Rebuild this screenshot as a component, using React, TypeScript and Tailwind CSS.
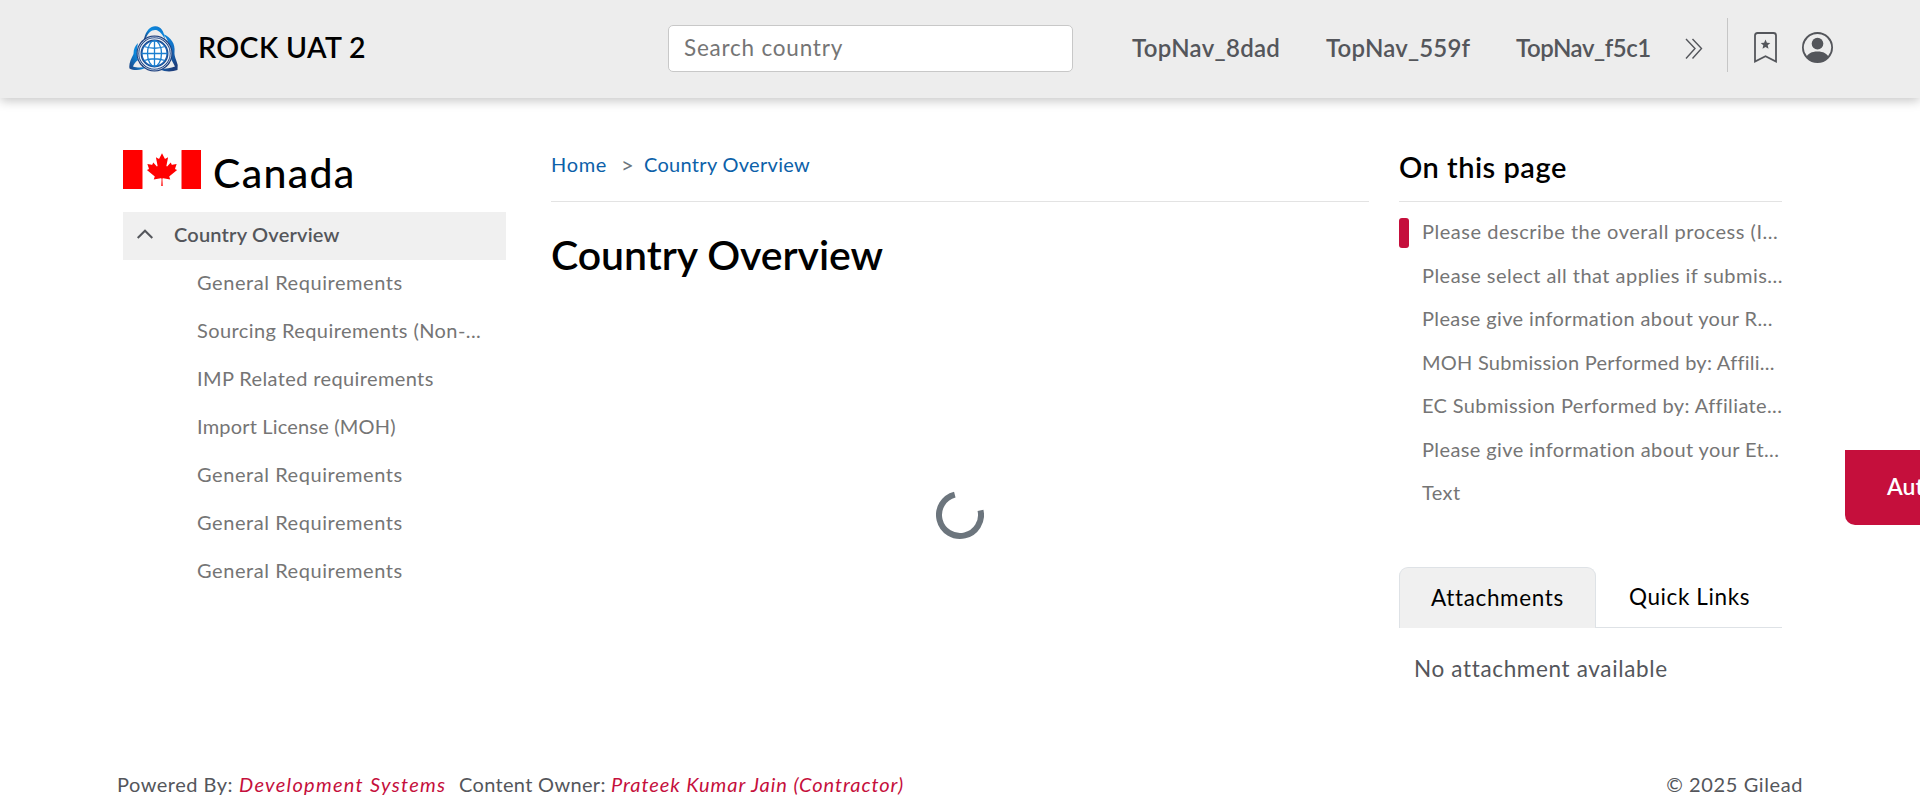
import { BsPersonCircle } from "react-icons/bs";

const topNav = [
  { label: "TopNav_8dad", cls: "w-[194px] tracking-[0.3px]" },
  { label: "TopNav_559f", cls: "w-[190px] tracking-[0.2px]" },
  { label: "TopNav_f5c1", cls: "w-[168px] tracking-[-0.45px]" },
];

const menu = [
  { label: "General Requirements", cls: "tracking-[0.56px]" },
  { label: "Sourcing Requirements (Non-...", cls: "tracking-[0.42px]" },
  { label: "IMP Related requirements", cls: "tracking-[0.38px]" },
  { label: "Import License (MOH)", cls: "tracking-[0.18px]" },
  { label: "General Requirements", cls: "tracking-[0.56px]" },
  { label: "General Requirements", cls: "tracking-[0.56px]" },
  { label: "General Requirements", cls: "tracking-[0.56px]" },
];

const sections = [
  { label: "Please describe the overall process (I...", cls: "tracking-[0.53px]" },
  { label: "Please select all that applies if submis...", cls: "tracking-[0.47px]" },
  { label: "Please give information about your R...", cls: "tracking-[0.38px]" },
  { label: "MOH Submission Performed by: Affili...", cls: "tracking-[0.25px]" },
  { label: "EC Submission Performed by: Affiliate...", cls: "tracking-[0.37px]" },
  { label: "Please give information about your Et...", cls: "tracking-[0.39px]" },
  { label: "Text", cls: "tracking-[0.4px]" },
];

function Logo() {
  return (
    <svg width="49" height="47" viewBox="0 0 49 47" fill="none">
      <defs>
        <linearGradient id="ribbonTop" x1="0" y1="1" x2="1" y2="0">
          <stop offset="0" stopColor="#1d3f7d" />
          <stop offset="0.5" stopColor="#0a8be0" />
          <stop offset="1" stopColor="#1470c4" />
        </linearGradient>
        <linearGradient id="ribbonRight" x1="0" y1="0" x2="0.6" y2="1">
          <stop offset="0" stopColor="#0a8be0" />
          <stop offset="0.6" stopColor="#1470c4" />
          <stop offset="1" stopColor="#1d3f7d" />
        </linearGradient>
      </defs>
      <path d="M15 13C17 4 22 0 26.5 0.3C32 0.6 35 5 36 13C32 6.500 29.500 4 26 4C22 4 19 7 16.500 13Z" fill="url(#ribbonTop)" />
      <path d="M34 8C42 11 46.500 18 45.500 26C45 30 47.500 34 48.700 39L48.500 44C43 46 36 46 31 43.500C37 42.500 42 42 46 40.500C44.500 37 41 33 41 28C41 19 39 13 34 8Z" fill="url(#ribbonRight)" />
      <path d="M9 17C7.500 23 7.500 30 9 34C6.500 36 4.500 38.500 4 40.500C8 42 13 41.500 18 41C13 44.500 5 45 0.500 42.500C-0.500 38 2 33 4.500 28C4.500 23 6 20 9 17Z" fill="url(#ribbonTop)" />
      <circle cx="25.500" cy="27.500" r="18" fill="#1d3f7d" />
      <circle cx="25.500" cy="27.500" r="16.500" stroke="#d6e2f0" strokeWidth="0.8" />
      <circle cx="25.500" cy="27.500" r="14.600" stroke="#e8f1fa" strokeWidth="1.3" />
      <circle cx="25.500" cy="27.500" r="12.600" fill="#fff" stroke="#1a5fae" strokeWidth="1.4" />
      <g stroke="#1b7fd0" strokeWidth="1.3">
        <path d="M25.500 14.500V40.500M12.500 27.500H38.500M15 20.500Q25.500 24 36 20.500M15 34.500Q25.500 31 36 34.500" />
        <ellipse cx="25.500" cy="27.500" rx="7" ry="12.800" />
      </g>
    </svg>
  );
}

function CanadaFlag() {
  return (
    <svg width="78" height="39" viewBox="0 0 9600 4800">
      <path fill="#f00" d="M0 0h2400l99 99h4602l99-99h2400v4800H7200l-99-99H2499l-99 99H0z" />
      <path
        fill="#fff"
        d="M2400 0h4800v4800H2400zm2490 4430-45-863a95 95 0 0 1 111-98l859 151-116-320a65 65 0 0 1 20-73l941-762-212-99a65 65 0 0 1-34-79l186-572-542 115a65 65 0 0 1-73-38l-105-247-423 454a65 65 0 0 1-111-57l204-1052-327 189a65 65 0 0 1-91-27l-332-652-332 652a65 65 0 0 1-91 27l-327-189 204 1052a65 65 0 0 1-111 57l-423-454-105 247a65 65 0 0 1-73 38l-542-115 186 572a65 65 0 0 1-34 79l-212 99 941 762a65 65 0 0 1 20 73l-116 320 859-151a95 95 0 0 1 111 98l-45 863z"
      />
    </svg>
  );
}

function Header() {
  return (
    <header className="flex h-[98px] items-center bg-[#ededed] pl-[129px] shadow-[0_3px_10px_rgba(0,0,0,0.22)]">
      <Logo />
      <div className="ml-[20px] w-[470px] whitespace-nowrap pb-[3px] text-[28.5px] font-semibold tracking-[0.4px] text-black">
        ROCK UAT 2
      </div>
      <div className="mb-[1px] flex h-[47px] w-[405px] items-center rounded-[5px] border border-[#c8c8c8] bg-white px-[15px] pb-[1px] text-[22.5px] tracking-[0.78px] text-[#757575]">
        Search country
      </div>
      <nav className="ml-[59px] flex whitespace-nowrap pb-[2px] text-[24px] font-semibold text-[#54565b]">
        {topNav.map((n) => (
          <a key={n.label} className={n.cls}>
            {n.label}
          </a>
        ))}
      </nav>
      <svg className="mb-[1px] ml-[1px] shrink-0" width="18" height="22" viewBox="0 0 18 22" fill="none" stroke="#54565b" strokeWidth="1.4">
        <path d="M1 1L10 10.5L1 20.5M7.5 1L16.5 10.5L7.5 20.5" />
      </svg>
      <div className="mb-[8px] ml-[24px] h-[54px] w-px bg-[#c6c6c6]" />
      <svg className="mb-[4px] ml-[26px]" width="23" height="31" viewBox="0 0 23 31" fill="none">
        <path d="M1 29.5V3.5Q1 1 3.5 1H19.5Q22 1 22 3.500V29.5L11.5 24.2Z" stroke="#54565b" strokeWidth="1.8" />
        <path d="M11.5 7.500L12.9 10.8L16.3 11L13.7 13.3L14.5 16.7L11.5 14.9L8.500 16.7L9.3 13.3L6.7 11L10.1 10.8Z" fill="#54565b" />
      </svg>
      <BsPersonCircle className="mb-[4px] ml-[25px] text-[#54565b]" size={31} />
    </header>
  );
}

function Sidebar() {
  return (
    <aside className="w-[383px]">
      <div className="flex h-[62px] items-start">
        <CanadaFlag />
        <h2 className="ml-[12px] text-[41px] font-medium leading-[45px] tracking-[1.3px] text-black">Canada</h2>
      </div>
      <div className="flex h-[48px] items-center bg-[#f0f0f0] pb-[4px] pl-[14px]">
        <svg width="16" height="10" viewBox="0 0 16 10" fill="none" stroke="#54565b" strokeWidth="2">
          <path d="M0.7 9L8 1.7L15.3 9" />
        </svg>
        <span className="ml-[21px] text-[20px] font-semibold tracking-[0.2px] text-[#54565b]">Country Overview</span>
      </div>
      <ul className="text-[20px] text-[#757575]">
        {menu.map((m, i) => (
          <li key={i} className="flex h-[48px] items-center whitespace-nowrap pb-[4px] pl-[74px]">
            <span className={m.cls}>{m.label}</span>
          </li>
        ))}
      </ul>
    </aside>
  );
}

function Content() {
  return (
    <main className="ml-[45px] w-[818px]">
      <div className="flex h-[52px] items-start border-b border-[#e3e3e3] text-[20px] leading-[29px] text-[#0c61a9]">
        <a className="w-[70px] tracking-[0.7px]">Home</a>
        <span className="w-[23px] text-[22px] text-[#6c757d]">&gt;</span>
        <a className="tracking-[0.3px]">Country Overview</a>
      </div>
      <h1 className="mt-[28px] whitespace-nowrap text-[41px] font-semibold leading-[50px] tracking-[-0.06px] text-black">
        Country Overview
      </h1>
      <div className="mt-[211px] flex justify-center">
        <svg width="48" height="48" viewBox="0 0 48 48" fill="none">
          <path d="M18.8 3.6A21 21 0 1 0 44.5 19.3" stroke="#6c757d" strokeWidth="6" />
        </svg>
      </div>
    </main>
  );
}

function PageNav() {
  return (
    <aside className="ml-[30px] w-[383px]">
      <h3 className="h-[52px] border-b border-[#e3e3e3] text-[29px] font-semibold leading-[33px] tracking-[0.5px] text-black">
        On this page
      </h3>
      <ul className="pt-[8px] text-[20px] text-[#757575]">
        {sections.map((s, i) => (
          <li key={s.label} className="flex h-[43.5px] items-center whitespace-nowrap">
            <span
              className={
                i === 0
                  ? "mt-[3px] h-[30px] w-[10px] shrink-0 rounded-[3px] bg-[#c50f3c]"
                  : "h-[30px] w-[10px] shrink-0"
              }
            />
            <span className={"ml-[13px] pb-[1px] " + s.cls}>{s.label}</span>
          </li>
        ))}
      </ul>
      <div className="mt-[52.5px] flex h-[61px] text-[22.5px] text-black">
        <div className="flex w-[197px] items-center justify-center rounded-t-[9px] border border-b-0 border-[#dee2e6] bg-[#f0f0f0] pb-[1px] tracking-[0.65px]">
          Attachments
        </div>
        <div className="flex flex-1 items-center border-b border-[#dee2e6] pl-[33px] tracking-[0.6px]">Quick Links</div>
      </div>
      <p className="mt-[26px] pl-[15px] text-[22.5px] leading-[30px] tracking-[0.65px] text-[#54565b]">No attachment available</p>
    </aside>
  );
}

function Footer() {
  return (
    <footer className="flex h-[56px] items-center whitespace-nowrap pb-[1px] pl-[117px] pr-[117px] text-[20px] text-[#54565b]">
      <span className="w-[122px] tracking-[0.5px]">Powered By:</span>
      <a className="w-[220px] italic tracking-[1.3px] text-[#c50f3c]">Development Systems</a>
      <span className="w-[152px] tracking-[0.32px]">Content Owner:</span>
      <a className="italic tracking-[0.94px] text-[#c50f3c]">Prateek Kumar Jain (Contractor)</a>
      <span className="ml-auto tracking-[0.6px]">© 2025 Gilead</span>
    </footer>
  );
}

export default function App() {
  return (
    <div className="relative h-[812px] w-[1920px] overflow-hidden bg-white font-['Lato','Open_Sans',sans-serif] [font-variant-ligatures:none]">
      <Header />
      <div className="flex h-[658px] pl-[123px] pt-[52px]">
        <Sidebar />
        <Content />
        <PageNav />
      </div>
      <Footer />
      <button className="absolute left-[1845px] top-[450px] flex h-[75px] w-[160px] items-center whitespace-nowrap rounded-b-[10px] bg-[#c50f3c] pb-[3px] pl-[42px] text-[23px] font-semibold text-white">
        Author
      </button>
    </div>
  );
}
